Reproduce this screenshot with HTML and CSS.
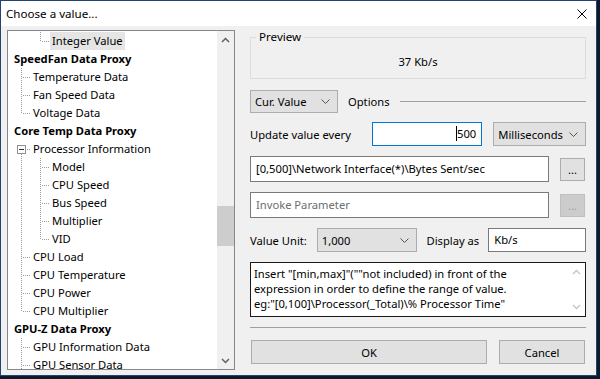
FILE: index.html
```html
<!DOCTYPE html>
<html lang="en">
<head>
    <meta charset="UTF-8">
    <title>Choose a value...</title>
    <link rel="stylesheet" href="styles.css">
</head>
<body>
    <div class="window">
        <div class="titlebar">
            <span class="title">Choose a value...</span>
            <span class="close">
                <svg width="10" height="10" viewBox="0 0 10 10"><path d="M0.5 0.5 L9.5 9.5 M9.5 0.5 L0.5 9.5" stroke="#000" stroke-width="1" fill="none"/></svg>
            </span>
        </div>

        <div class="content">
            <div class="tree">
                <ul class="tree-list">
                    <li class="node"><span class="guide"></span><span class="guide ell"></span><span class="label selected">Integer Value</span></li>
                    <li class="node root"><span class="label">SpeedFan Data Proxy</span></li>
                    <li class="node"><span class="guide tee"></span><span class="label">Temperature Data</span></li>
                    <li class="node"><span class="guide tee"></span><span class="label">Fan Speed Data</span></li>
                    <li class="node"><span class="guide ell"></span><span class="label">Voltage Data</span></li>
                    <li class="node root"><span class="label">Core Temp Data Proxy</span></li>
                    <li class="node"><span class="guide open"><span class="expander"></span></span><span class="label">Processor Information</span></li>
                    <li class="node"><span class="guide pipe"></span><span class="guide tee"></span><span class="label">Model</span></li>
                    <li class="node"><span class="guide pipe"></span><span class="guide tee"></span><span class="label">CPU Speed</span></li>
                    <li class="node"><span class="guide pipe"></span><span class="guide tee"></span><span class="label">Bus Speed</span></li>
                    <li class="node"><span class="guide pipe"></span><span class="guide tee"></span><span class="label">Multiplier</span></li>
                    <li class="node"><span class="guide pipe"></span><span class="guide ell"></span><span class="label">VID</span></li>
                    <li class="node"><span class="guide tee"></span><span class="label">CPU Load</span></li>
                    <li class="node"><span class="guide tee"></span><span class="label">CPU Temperature</span></li>
                    <li class="node"><span class="guide tee"></span><span class="label">CPU Power</span></li>
                    <li class="node"><span class="guide ell"></span><span class="label">CPU Multiplier</span></li>
                    <li class="node root"><span class="label">GPU-Z Data Proxy</span></li>
                    <li class="node"><span class="guide tee"></span><span class="label">GPU Information Data</span></li>
                    <li class="node"><span class="guide tee"></span><span class="label">GPU Sensor Data</span></li>
                </ul>
                <div class="vscroll">
                    <div class="arrow">
                        <svg width="9" height="6" viewBox="0 0 9 6"><path d="M1 5 L4.5 1.5 L8 5" stroke="#606060" stroke-width="1.5" fill="none"/></svg>
                    </div>
                    <div class="track"><div class="thumb"></div></div>
                    <div class="arrow">
                        <svg width="9" height="6" viewBox="0 0 9 6"><path d="M1 1 L4.5 4.5 L8 1" stroke="#606060" stroke-width="1.5" fill="none"/></svg>
                    </div>
                </div>
            </div>

            <div class="panel">
                <fieldset class="preview">
                    <legend>Preview</legend>
                    <div class="preview-value">37 Kb/s</div>
                </fieldset>

                <div class="row options-row">
                    <div class="combo combo-mode">
                        <span>Cur. Value</span>
                        <svg width="9" height="5" viewBox="0 0 9 5"><path d="M0.5 0.5 L4.5 4.5 L8.5 0.5" stroke="#555" stroke-width="1" fill="none"/></svg>
                    </div>
                    <span class="options-label">Options</span>
                    <span class="options-line"></span>
                </div>

                <div class="row update-row">
                    <span class="update-label">Update value every</span>
                    <div class="field field-focus interval"><span class="caret"></span>500</div>
                    <div class="combo combo-unit">
                        <span>Milliseconds</span>
                        <svg width="9" height="5" viewBox="0 0 9 5"><path d="M0.5 0.5 L4.5 4.5 L8.5 0.5" stroke="#555" stroke-width="1" fill="none"/></svg>
                    </div>
                </div>

                <div class="row expr-row">
                    <div class="field expr">[0,500]\Network Interface(*)\Bytes Sent/sec</div>
                    <button class="btn btn-dots">...</button>
                </div>

                <div class="row expr-row">
                    <div class="field expr placeholder">Invoke Parameter</div>
                    <button class="btn btn-dots" disabled>...</button>
                </div>

                <div class="row unit-row">
                    <span class="unit-label">Value Unit:</span>
                    <div class="combo combo-scale">
                        <span>1,000</span>
                        <svg width="9" height="5" viewBox="0 0 9 5"><path d="M0.5 0.5 L4.5 4.5 L8.5 0.5" stroke="#555" stroke-width="1" fill="none"/></svg>
                    </div>
                    <span class="display-label">Display as</span>
                    <div class="field display">Kb/s</div>
                </div>

                <div class="help">
                    <div class="help-text">Insert "[min,max]"(""not included) in front of the<br>expression in order to define the range of value.<br>eg:"[0,100]\Processor(_Total)\% Processor Time"</div>
                    <div class="help-scroll">
                        <svg width="9" height="6" viewBox="0 0 9 6"><path d="M1 5 L4.5 1.5 L8 5" stroke="#c4c4c4" stroke-width="1.3" fill="none"/></svg>
                        <svg width="9" height="6" viewBox="0 0 9 6"><path d="M1 1 L4.5 4.5 L8 1" stroke="#c4c4c4" stroke-width="1.3" fill="none"/></svg>
                    </div>
                </div>

                <div class="separator"></div>

                <div class="row buttons">
                    <button class="btn btn-ok">OK</button>
                    <button class="btn btn-cancel">Cancel</button>
                </div>
            </div>
        </div>
    </div>
</body>
</html>
```

FILE: styles.css
```css
* {
    margin: 0;
    padding: 0;
    box-sizing: border-box;
}

body {
    background: #0e1a2b;
    font-family: 'Noto Sans', 'Open Sans', sans-serif;
    font-size: 11.2px;
    color: #000;
    width: 600px;
    height: 379px;
    overflow: hidden;
}

.window {
    width: 597px;
    height: 376px;
    border: 1px solid #22446e;
    background: #f0f0f0;
    display: flex;
    flex-direction: column;
}

.titlebar {
    height: 25px;
    background: white;
    display: flex;
    align-items: center;
    justify-content: space-between;
    padding: 0 8px 0 5px;
    flex-shrink: 0;
    font-size: 11.6px;
}

.close {
    display: flex;
    margin-right: 1px;
}

.content {
    display: flex;
    gap: 15px;
    padding: 4px 10px 0 6px;
}

/* arbre */

.tree {
    width: 228px;
    height: 340px;
    background: white;
    border: 1px solid #828790;
    display: flex;
    overflow: hidden;
}

.tree-list {
    list-style: none;
    flex: 1;
    padding: 1px 0 0 4px;
    overflow: hidden;
}

.node {
    display: flex;
    height: 18px;
    line-height: 18px;
    white-space: nowrap;
}

.node.root .label {
    font-weight: bold;
}

.label {
    padding: 0 2px;
}

.label.selected {
    background: #e5e5e5;
}

.guide {
    width: 19px;
    height: 18px;
    flex-shrink: 0;
    background-repeat: no-repeat;
}

.guide.pipe {
    background-image: repeating-linear-gradient(to bottom, #9a9a9a 0 1px, transparent 1px 2px);
    background-size: 1px 18px;
    background-position: 9px 0;
}

.guide.tee {
    background-image:
        repeating-linear-gradient(to bottom, #9a9a9a 0 1px, transparent 1px 2px),
        repeating-linear-gradient(to right, #9a9a9a 0 1px, transparent 1px 2px);
    background-size: 1px 18px, 9px 1px;
    background-position: 9px 0, 11px 9px;
}

.guide.ell {
    background-image:
        repeating-linear-gradient(to bottom, #9a9a9a 0 1px, transparent 1px 2px),
        repeating-linear-gradient(to right, #9a9a9a 0 1px, transparent 1px 2px);
    background-size: 1px 10px, 9px 1px;
    background-position: 9px 0, 11px 9px;
}

.guide.open {
    display: flex;
    align-items: flex-start;
    padding: 5px 0 0 5px;
    background-image:
        repeating-linear-gradient(to bottom, #9a9a9a 0 1px, transparent 1px 2px),
        repeating-linear-gradient(to right, #9a9a9a 0 1px, transparent 1px 2px);
    background-size: 1px 5px, 5px 1px;
    background-position: 9px 14px, 15px 9px;
}

.expander {
    width: 9px;
    height: 9px;
    border: 1px solid #919191;
    background: linear-gradient(#333, #333) no-repeat center / 5px 1px;
}

.vscroll {
    width: 17px;
    background: #f0f0f0;
    display: flex;
    flex-direction: column;
}

.arrow {
    height: 17px;
    display: flex;
    align-items: center;
    justify-content: center;
}

.track {
    flex: 1;
}

.thumb {
    margin-top: 158px;
    height: 40px;
    background: #cdcdcd;
}

/* panneau de droite */

.panel {
    width: 336px;
    display: flex;
    flex-direction: column;
}

.row {
    display: flex;
    align-items: center;
}

.preview {
    border: 1px solid #dcdcdc;
    padding: 0 0 8px;
    margin-top: 0;
}

.preview legend {
    margin-left: 5px;
    padding: 0 3px;
    line-height: 14px;
    font-size: 11.6px;
}

.preview-value {
    text-align: center;
    line-height: 16px;
    margin-top: 10px;
}

.combo {
    height: 23px;
    background: #e1e1e1;
    border: 1px solid #adadad;
    display: flex;
    align-items: center;
    justify-content: space-between;
    padding: 0 7px 0 4px;
}

.options-row {
    margin-top: 11px;
}

.combo-mode {
    width: 88px;
}

.options-label {
    margin-left: 10px;
}

.options-line {
    flex: 1;
    height: 1px;
    background: #a0a0a0;
    margin-left: 10px;
}

.field {
    background: white;
    border: 1px solid #7a7a7a;
    height: 24px;
    line-height: 22px;
    padding: 0 5px;
    white-space: nowrap;
    overflow: hidden;
}

.field-focus {
    border-color: #0078d7;
}

.update-row {
    margin-top: 9px;
}

.update-label {
    width: 122px;
}

.interval {
    width: 111px;
    text-align: right;
}

.caret {
    display: inline-block;
    width: 1px;
    height: 15px;
    background: #000;
    vertical-align: -3px;
}

.combo-unit {
    width: 93px;
    height: 24px;
    margin-left: 11px;
}

.expr-row {
    margin-top: 10px;
    justify-content: space-between;
}

.expr {
    width: 299px;
    height: 26px;
    line-height: 24px;
}

.placeholder {
    color: #6d6d6d;
}

.btn {
    font-family: inherit;
    font-size: 11.2px;
    color: #000;
    background: #e1e1e1;
    border: 1px solid #adadad;
    height: 23px;
}

.btn-dots {
    width: 25px;
    margin-right: 1px;
}

.btn:disabled {
    background: #cccccc;
    border-color: #bfbfbf;
    color: #a0a0a0;
}

.unit-row {
    margin-top: 10px;
}

.unit-label {
    width: 67px;
}

.combo-scale {
    width: 100px;
    height: 24px;
}

.display-label {
    margin-left: 10px;
    width: 62px;
}

.display {
    width: 98px;
}

.help {
    margin-top: 10px;
    height: 55px;
    background: white;
    border: 1px solid #1a1a1a;
    display: flex;
}

.help-text {
    flex: 1;
    padding: 3px 0 0 3px;
    line-height: 15px;
    white-space: nowrap;
}

.help-scroll {
    width: 17px;
    display: flex;
    flex-direction: column;
    justify-content: space-between;
    align-items: center;
    padding: 6px 0 6px;
}

.separator {
    margin-top: 10px;
    height: 1px;
    background: #a0a0a0;
}

.buttons {
    margin-top: 12px;
    justify-content: space-between;
}

.btn-ok {
    width: 236px;
    height: 24px;
    margin-left: 1px;
}

.btn-cancel {
    width: 86px;
    height: 24px;
    margin-right: 1px;
}
```
